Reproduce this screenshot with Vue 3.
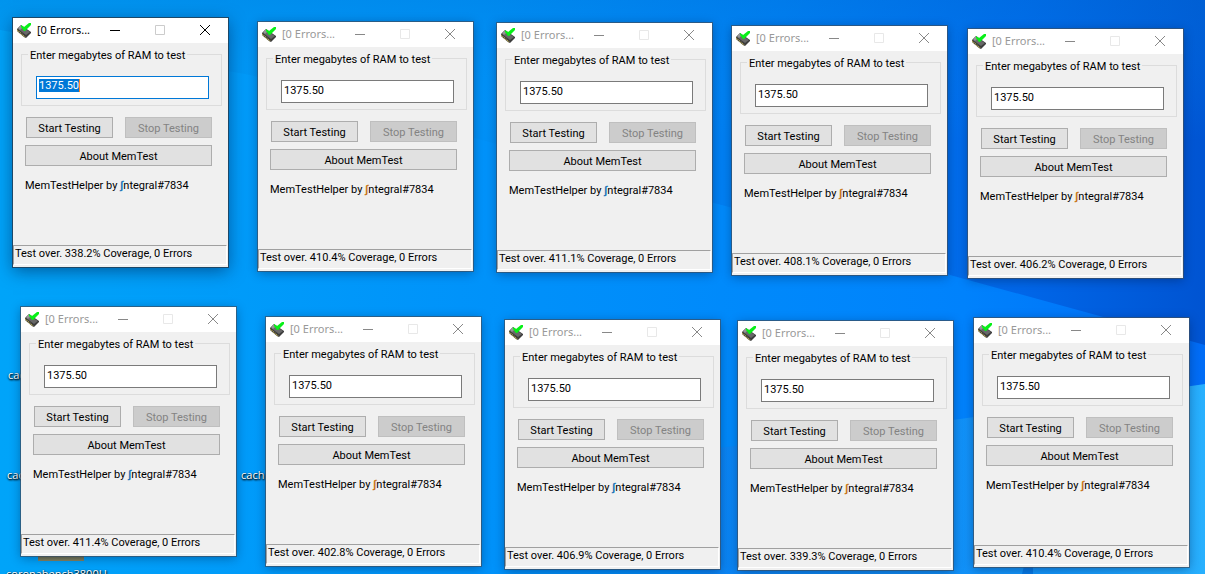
<script setup>
import { ref } from 'vue'

const windows = ref([
  { x: 13, y: 18, coverage: '338.2', active: true, megabytes: '1375.50' },
  { x: 258, y: 22, coverage: '410.4', warm: true, megabytes: '1375.50' },
  { x: 497, y: 23, coverage: '411.1', megabytes: '1375.50' },
  { x: 732, y: 26, coverage: '408.1', warm: true, megabytes: '1375.50' },
  { x: 968, y: 29, coverage: '406.2', warm: true, megabytes: '1375.50' },
  { x: 21, y: 307, coverage: '411.4', megabytes: '1375.50' },
  { x: 266, y: 317, coverage: '402.8', warm: true, megabytes: '1375.50' },
  { x: 505, y: 320, coverage: '406.9', megabytes: '1375.50' },
  { x: 738, y: 321, coverage: '339.3', warm: true, megabytes: '1375.50' },
  { x: 974, y: 318, coverage: '410.4', warm: true, megabytes: '1375.50' },
])

const shortcuts = [
  { x: 8, y: 367, name: 'cac' },
  { x: 7, y: 467, name: 'cac' },
  { x: 241, y: 467, name: 'cach' },
  { x: 6, y: 566, name: 'coronabench3800U' },
]
</script>

<template>
  <main class="desktop">
    <svg class="wallpaper" viewBox="0 0 1205 574" preserveAspectRatio="none" aria-hidden="true">
      <defs>
        <linearGradient id="sky" x1="0" y1="0" x2="1" y2="0">
          <stop offset="0" stop-color="#00a0f6" />
          <stop offset="0.4" stop-color="#0090f6" />
          <stop offset="0.65" stop-color="#007cf2" />
          <stop offset="0.85" stop-color="#0066e8" />
          <stop offset="1" stop-color="#0054d2" />
        </linearGradient>
        <linearGradient id="glow" x1="0" y1="0" x2="1" y2="0">
          <stop offset="0" stop-color="#00a4f9" />
          <stop offset="0.45" stop-color="#0090fa" />
          <stop offset="0.8" stop-color="#0082fc" />
          <stop offset="1" stop-color="#006cf6" />
        </linearGradient>
        <linearGradient id="beam" x1="0" y1="0" x2="1" y2="0">
          <stop offset="0" stop-color="#0a84f4" />
          <stop offset="0.7" stop-color="#1496fa" />
          <stop offset="1" stop-color="#28b0fe" />
        </linearGradient>
        <linearGradient id="fade" x1="0" y1="0" x2="0" y2="1">
          <stop offset="0" stop-color="#0078d8" stop-opacity="0.3" />
          <stop offset="1" stop-color="#00a0ff" stop-opacity="0" />
        </linearGradient>
      </defs>
      <rect width="1205" height="574" fill="url(#sky)" />
      <rect width="1205" height="140" fill="url(#fade)" />
      <path d="M0 30 L250 75 L500 145 L740 210 L950 275 L1205 345 V574 H0Z" fill="url(#glow)" />
      <path d="M700 450 L953 420 L1205 384 V574 H700Z" fill="url(#beam)" />
      <path d="M1024 566 H1033 V574 H1022Z" fill="#0678e4" />
    </svg>

    <span
      v-for="(item, i) in shortcuts"
      :key="'s' + i"
      class="shortcut"
      :style="{ left: item.x + 'px', top: item.y + 'px' }"
    >{{ item.name }}</span>
    <i class="thumbnail"></i>

    <section
      v-for="(win, i) in windows"
      :key="i"
      class="window"
      :class="{ active: win.active }"
      :style="{ left: win.x + 'px', top: win.y + 'px' }"
    >
      <header class="titlebar">
        <svg class="app-icon" viewBox="0 0 16 16" aria-hidden="true">
          <path d="M0 7 L4 3 L14 10 V11 L9 16 L7 15 L0 9Z" fill="#3c3c3c" />
          <path d="M1 7 L4 4 L13 10 L9 13Z" fill="#686868" />
          <path d="M1 6 L4 3 L6 5 L3 8Z" fill="#969696" />
          <path d="M0 8 L8 15" stroke="#b8a850" stroke-width="1.4" stroke-dasharray="1 1" />
          <path d="M4 3 L7 5 L12 1 L14 1 V3 L8 9 H7 L4 5Z" fill="#08f018" />
        </svg>
        <h1 class="title">[0 Errors...</h1>
        <button class="caption-button" type="button" aria-label="Minimize">
          <svg viewBox="0 0 10 10"><path d="M0 5.5H10" /></svg>
        </button>
        <button class="caption-button" type="button" aria-label="Maximize" disabled>
          <svg viewBox="0 0 10 10"><path d="M.5 .5H9.5V9.5H.5Z" /></svg>
        </button>
        <button class="caption-button" type="button" aria-label="Close">
          <svg viewBox="0 0 10 10"><path d="M0 0L10 10M10 0L0 10" /></svg>
        </button>
      </header>

      <form class="body" @submit.prevent>
        <div class="group">
          <label class="group-label" :for="'ram' + i">Enter megabytes of RAM to test</label>
          <div class="field">
            <input :id="'ram' + i" v-model="win.megabytes" class="ram" type="text" />
            <span v-if="win.active" class="selection" aria-hidden="true">{{ win.megabytes }}</span>
          </div>
        </div>
        <div class="actions">
          <button class="button" type="button">Start Testing</button>
          <button class="button" type="button" disabled>Stop Testing</button>
        </div>
        <button class="button about" type="button">About MemTest</button>
        <p class="credit">MemTestHelper by <span class="integral" :class="{ warm: win.warm }">∫</span>ntegral#7834</p>
      </form>
      <footer class="status">Test over. {{ win.coverage }}% Coverage, 0 Errors</footer>
    </section>
  </main>
</template>

<style>
body {
  margin: 0;
}
</style>

<style scoped>
.desktop {
  position: relative;
  height: 100vh;
  overflow: hidden;
  background: #0090f6;
  font: 11px/14px Roboto, "Liberation Sans", Arial, sans-serif;
  color: #000;
}
.wallpaper {
  display: block;
  width: 100%;
  height: 100%;
}
.shortcut {
  position: absolute;
  font: 11px/16px "Open Sans", "Noto Sans", sans-serif;
  color: #fff;
  text-shadow: 1px 1px 2px #000, 0 1px 2px #000;
}
.thumbnail {
  position: absolute;
  left: 38px;
  top: 550px;
  width: 46px;
  height: 11px;
  background: linear-gradient(#48502c, #8a8660);
}
.window {
  position: absolute;
  display: flex;
  flex-direction: column;
  box-sizing: border-box;
  width: 215px;
  background: #f0f0f0;
  box-shadow: 0 0 0 1px rgba(60, 80, 100, 0.7), 0 2px 10px rgba(0, 20, 60, 0.4);
}
.window.active {
  box-shadow: 0 0 0 1px #1c4868, 0 4px 16px rgba(0, 20, 60, 0.5);
}
.titlebar {
  box-sizing: border-box;
  display: flex;
  align-items: center;
  height: 25px;
  padding: 0 1px 1px 4px;
  background: #fff;
}
.app-icon {
  width: 16px;
  height: 16px;
}
.title {
  flex: 1;
  min-width: 0;
  margin: 0 0 0 4px;
  font: 11px/16px "Noto Sans", "Open Sans", sans-serif;
  color: #999;
  white-space: nowrap;
}
.active .title {
  color: #000;
}
.caption-button {
  display: flex;
  align-items: center;
  justify-content: center;
  width: 45px;
  height: 24px;
  padding: 0;
  border: 0;
  background: none;
}
.caption-button svg {
  width: 10px;
  height: 10px;
  overflow: visible;
  fill: none;
  stroke: #888;
  stroke-width: 1;
}
.caption-button:disabled svg {
  stroke: #e8e8e8;
}
.active .caption-button svg {
  stroke: #000;
}
.active .caption-button:disabled svg {
  stroke: #ccc;
}
.body {
  display: flex;
  flex-direction: column;
  padding: 11px 6px 0 8px;
}
.group {
  position: relative;
  padding: 21px 12px 6px 14px;
  border: 1px solid #dcdcdc;
}
.group-label {
  position: absolute;
  left: 6px;
  top: -6px;
  padding: 0 2px;
  background: #f0f0f0;
  white-space: nowrap;
}
.field {
  position: relative;
  display: flex;
}
.ram {
  flex: 1;
  box-sizing: border-box;
  min-width: 0;
  height: 23px;
  margin: 0;
  padding: 0 2px 3px;
  border: 1px solid #7a7a7a;
  border-radius: 0;
  outline: 0;
  background: #fff;
  font: inherit;
  color: #000;
}
.active .ram {
  border-color: #0078d7;
}
.selection {
  position: absolute;
  left: 3px;
  top: 3px;
  height: 13px;
  line-height: 14px;
  border-right: 1px solid #ff8728;
  background: #0078d7;
  color: #fff;
}
.actions {
  display: flex;
  gap: 12px;
  margin: 11px 10px 7px 5px;
}
.button {
  flex: 1;
  box-sizing: border-box;
  height: 21px;
  padding: 2px 0 0;
  border: 1px solid #adadad;
  border-radius: 0;
  background: #e1e1e1;
  font: inherit;
  color: #000;
}
.button:disabled {
  border-color: #bfbfbf;
  background: #ccc;
  color: #838383;
}
.about {
  flex: none;
  margin: 0 10px 0 4px;
}
.credit {
  margin: 13px 0 0 4px;
  white-space: nowrap;
}
.integral {
  font-weight: bold;
  color: #2478b8;
}
.integral.warm {
  color: #c87820;
}
.status {
  box-sizing: border-box;
  height: 20px;
  margin: 52px 1px 2px 0;
  padding: 1px 0 0 1px;
  border: 1px solid #a0a0a0;
  border-right-color: #fff;
  border-bottom-color: #fff;
  white-space: nowrap;
}
</style>
